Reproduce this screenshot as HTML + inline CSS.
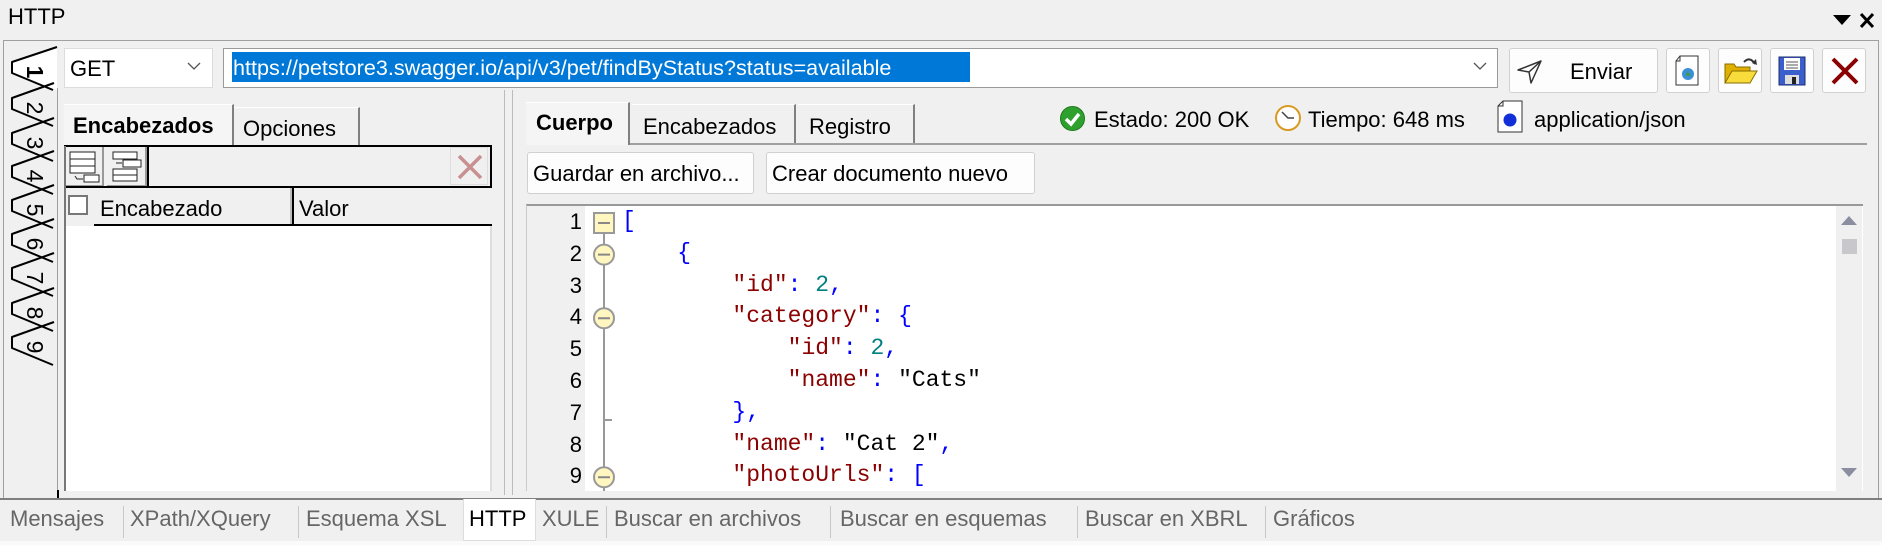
<!DOCTYPE html>
<html><head><meta charset="utf-8"><style>
*{margin:0;padding:0;box-sizing:border-box}
body{width:1882px;height:545px;background:#f0f0f0;font-family:"Liberation Sans",sans-serif;font-size:22px;color:#000;position:relative;overflow:hidden}
.a{position:absolute}
.btn{position:absolute;background:#fdfdfd;border:1px solid #d0d0d0;border-radius:3px}
.code{position:absolute;font-family:"Liberation Mono",monospace;font-size:23px;white-space:pre;line-height:31.8px}
.k{color:#8b0000}.p{color:#0000ff}.n{color:#008080}
.ln{position:absolute;width:40px;text-align:right;font-size:22px;line-height:31.8px}
.bt{position:absolute;top:506px;color:#666;font-size:22px;white-space:nowrap}
.sep{position:absolute;top:506px;width:1px;height:32px;background:#c8c8c8}
</style></head><body>
<div class="a" style="left:8px;top:4px;font-size:22px">HTTP</div>
<svg class="a" style="left:1830px;top:10px" width="50" height="22"><path d="M3 5 L21 5 L12 15 Z" fill="#000"/><path d="M31 4 L43 17 M43 4 L31 17" stroke="#000" stroke-width="3"/></svg>
<div class="a" style="left:3px;top:40px;width:1876px;height:460px;border:1px solid #a0a0a0;border-bottom:2px solid #808080"></div>
<!-- vertical tabs (page coords offset by 40) -->
<svg class="a" style="left:0;top:40px" width="60" height="340">
<path d="M57 7 L12 22 L12 33 L57 50 Z" fill="#fff"/>
<g stroke="#000" stroke-width="2" fill="none" stroke-linejoin="round">
<path d="M57 7 L12 22 L12 33 L53 50"/>
<path d="M54 43 L12 58 L12 69 L53 86"/>
<path d="M54 78 L12 93 L12 104 L53 121"/>
<path d="M54 111 L12 126 L12 137 L53 154"/>
<path d="M54 145 L12 160 L12 171 L53 188"/>
<path d="M54 179 L12 194 L12 205 L53 222"/>
<path d="M54 213 L12 228 L12 239 L53 256"/>
<path d="M54 248 L12 263 L12 274 L53 291"/>
<path d="M54 282 L12 297 L12 308 L53 325"/>
</g>
<g font-family="Liberation Sans" font-size="23" text-anchor="middle">
<text transform="translate(35,32) rotate(90)" dominant-baseline="central" font-weight="bold">1</text>
<text transform="translate(35,68) rotate(90)" dominant-baseline="central">2</text>
<text transform="translate(35,103) rotate(90)" dominant-baseline="central">3</text>
<text transform="translate(35,136) rotate(90)" dominant-baseline="central">4</text>
<text transform="translate(35,170) rotate(90)" dominant-baseline="central">5</text>
<text transform="translate(35,204) rotate(90)" dominant-baseline="central">6</text>
<text transform="translate(35,238) rotate(90)" dominant-baseline="central">7</text>
<text transform="translate(35,273) rotate(90)" dominant-baseline="central">8</text>
<text transform="translate(35,307) rotate(90)" dominant-baseline="central">9</text>
</g></svg>
<div class="a" style="left:57px;top:88px;width:1px;height:408px;background:#a0a0a0"></div>
<div class="a" style="left:57px;top:490px;width:2px;height:10px;background:#000"></div>
<!-- GET combo -->
<div class="btn" style="left:64px;top:48px;width:149px;height:40px;border-color:#dcdcdc;border-radius:0;background:#fff"></div>
<div class="a" style="left:70px;top:56px">GET</div>
<svg class="a" style="left:186px;top:60px" width="16" height="12"><path d="M2 3 L8 9 L14 3" stroke="#555" fill="none" stroke-width="1.3"/></svg>
<!-- URL -->
<div class="a" style="left:223px;top:48px;width:1275px;height:40px;background:#fff;border:1px solid #999"></div>
<div class="a" style="left:232px;top:52px;width:738px;height:30px;background:#0078d7"></div>
<div class="a" style="left:233px;top:55px;color:#fff;font-size:21.6px;white-space:nowrap">https://petstore3.swagger.io/api/v3/pet/findByStatus?status=available</div>
<svg class="a" style="left:1472px;top:60px" width="16" height="12"><path d="M2 3 L8 9 L14 3" stroke="#555" fill="none" stroke-width="1.3"/></svg>
<!-- Enviar etc -->
<div class="btn" style="left:1509px;top:48px;width:149px;height:45px"></div>
<svg class="a" style="left:1516px;top:58px" width="30" height="28"><path d="M2 12 L25 3 L15 25 L13 14 Z M13 14 L25 3" stroke="#333" fill="none" stroke-width="1.5" stroke-linejoin="round"/></svg>
<div class="a" style="left:1570px;top:59px">Enviar</div>
<div class="btn" style="left:1666px;top:48px;width:44px;height:45px"></div>
<svg class="a" style="left:1673px;top:54px" width="30" height="34"><path d="M7 2 L25 2 L25 31 L3 31 L3 7 Z" fill="#fff" stroke="#333"/><path d="M3 7 L7 7 L7 2" fill="none" stroke="#333"/><circle cx="15" cy="20" r="6" fill="#3a8fd6"/><path d="M12 16 q3 2 1 5 q3 2 5 0" fill="#3c9d3c"/></svg>
<div class="btn" style="left:1718px;top:48px;width:44px;height:45px"></div>
<svg class="a" style="left:1722px;top:55px" width="38" height="32"><path d="M3 9 L12 9 L14 12 L28 12 L28 28 L3 28 Z" fill="#e0b000" stroke="#8a6d00"/><path d="M3 28 L10 16 L35 16 L28 28 Z" fill="#f8dc3c" stroke="#8a6d00"/><path d="M22 7 q6 -6 11 2" stroke="#333" fill="none" stroke-width="2"/><path d="M30 8 L35 10 L34 4" fill="#333"/></svg>
<div class="btn" style="left:1770px;top:48px;width:44px;height:45px"></div>
<svg class="a" style="left:1777px;top:55px" width="30" height="32"><rect x="2" y="2" width="26" height="28" fill="#3a5fcd" stroke="#1c2d6e"/><rect x="7" y="3" width="16" height="12" fill="#fff"/><path d="M9 7 H21 M9 10 H21 M9 13 H21" stroke="#555"/><rect x="8" y="20" width="14" height="9" fill="#ddd"/><rect x="15" y="22" width="4" height="7" fill="#222"/></svg>
<div class="btn" style="left:1822px;top:48px;width:44px;height:45px"></div>
<svg class="a" style="left:1830px;top:56px" width="30" height="30"><path d="M3 3 L27 27 M27 3 L3 27" stroke="#8b0000" stroke-width="4"/></svg>
<!-- left pane tabs -->
<div class="a" style="left:64px;top:104px;width:170px;height:42px;background:#f5f5f5;border-right:2px solid #808080;border-top:1px solid #fff"></div>
<div class="a" style="left:73px;top:113px;font-weight:bold">Encabezados</div>
<div class="a" style="left:234px;top:107px;width:126px;height:39px;border-right:2px solid #808080;border-top:1px solid #fff"></div>
<div class="a" style="left:243px;top:116px">Opciones</div>
<!-- toolbar -->
<div class="a" style="left:64px;top:145px;width:428px;height:2px;background:#000"></div>
<div class="a" style="left:64px;top:147px;width:40px;height:40px;border-right:2px solid #999;border-bottom:2px solid #999"></div>
<svg class="a" style="left:69px;top:151px" width="32" height="32"><rect x="1" y="1" width="25" height="7" fill="#fff" stroke="#222"/><rect x="1" y="8" width="25" height="7" fill="#fff" stroke="#222"/><rect x="1" y="15" width="25" height="7" fill="#fff" stroke="#222"/><rect x="15" y="24" width="15" height="7" fill="#fff" stroke="#222"/><path d="M14 28 L8 28 L6 25" stroke="#222" fill="none"/></svg>
<div class="a" style="left:107px;top:147px;width:40px;height:40px;border-right:2px solid #999;border-bottom:2px solid #999"></div>
<svg class="a" style="left:111px;top:151px" width="32" height="32"><rect x="2" y="1" width="24" height="7" fill="#fff" stroke="#222"/><rect x="12" y="9" width="18" height="7" fill="#fff" stroke="#222"/><rect x="2" y="18" width="24" height="12" fill="#fff" stroke="#222"/><path d="M2 24 H26" stroke="#222"/><path d="M5 12 H11" stroke="#222"/></svg>
<div class="a" style="left:147px;top:147px;width:2px;height:40px;background:#000"></div>
<div class="a" style="left:450px;top:147px;width:38px;height:38px;border:1px solid #ddd"></div>
<svg class="a" style="left:455px;top:152px" width="30" height="30"><path d="M4 4 L26 26 M26 4 L4 26" stroke="#c89090" stroke-width="3.5"/></svg>
<div class="a" style="left:490px;top:147px;width:2px;height:40px;background:#000"></div>
<div class="a" style="left:64px;top:186px;width:428px;height:2px;background:#000"></div>
<!-- header -->
<div class="a" style="left:68px;top:195px;width:20px;height:20px;border:2px solid #777;background:#fff"></div>
<div class="a" style="left:94px;top:188px;width:198px;height:37px;border-right:2px solid #bbb"></div>
<div class="a" style="left:100px;top:196px">Encabezado</div>
<div class="a" style="left:292px;top:188px;width:2px;height:38px;background:#000"></div>
<div class="a" style="left:299px;top:196px">Valor</div>
<div class="a" style="left:94px;top:224px;width:398px;height:2px;background:#000"></div>
<div class="a" style="left:64px;top:226px;width:428px;height:265px;background:#fff"></div>
<div class="a" style="left:64px;top:146px;width:2px;height:345px;background:#777"></div>
<div class="a" style="left:490px;top:226px;width:2px;height:265px;background:#ddd"></div>
<!-- splitter -->
<div class="a" style="left:504px;top:90px;width:1px;height:405px;background:#bbb"></div>
<div class="a" style="left:512px;top:90px;width:1px;height:405px;background:#bbb"></div>
<!-- right tabs -->
<div class="a" style="left:526px;top:102px;width:104px;height:43px;background:#f5f5f5;border-right:2px solid #808080;border-top:1px solid #fff"></div>
<div class="a" style="left:536px;top:110px;font-weight:bold">Cuerpo</div>
<div class="a" style="left:632px;top:104px;width:164px;height:41px;border-right:2px solid #808080;border-top:1px solid #fff"></div>
<div class="a" style="left:643px;top:114px">Encabezados</div>
<div class="a" style="left:798px;top:104px;width:117px;height:41px;border-right:2px solid #808080;border-top:1px solid #fff"></div>
<div class="a" style="left:809px;top:114px">Registro</div>
<div class="a" style="left:630px;top:143px;width:1237px;height:2px;background:#a0a0a0"></div>
<!-- status -->
<svg class="a" style="left:1059px;top:105px" width="27" height="27"><circle cx="13.5" cy="13.5" r="12" fill="#2ea02e" stroke="#1d7a1d"/><path d="M7 14 L12 19 L20 9" stroke="#fff" stroke-width="3.5" fill="none"/></svg>
<div class="a" style="left:1094px;top:107px">Estado: 200 OK</div>
<svg class="a" style="left:1274px;top:104px" width="28" height="28"><circle cx="14" cy="14" r="12" fill="#fff" stroke="#d89a20" stroke-width="2"/><path d="M8 8 L14 14 L20 14" stroke="#444" fill="none" stroke-width="1.5"/></svg>
<div class="a" style="left:1308px;top:107px">Tiempo: 648 ms</div>
<svg class="a" style="left:1497px;top:100px" width="28" height="34"><path d="M6 1 L25 1 L25 32 L1 32 L1 6 Z" fill="#fff" stroke="#333"/><path d="M1 6 L6 6 L6 1" fill="none" stroke="#333"/><circle cx="13" cy="20" r="6.5" fill="#1230d8"/></svg>
<div class="a" style="left:1534px;top:107px">application/json</div>
<!-- buttons -->
<div class="btn" style="left:527px;top:152px;width:227px;height:42px"></div>
<div class="a" style="left:533px;top:161px">Guardar en archivo...</div>
<div class="btn" style="left:766px;top:152px;width:269px;height:42px"></div>
<div class="a" style="left:772px;top:161px">Crear documento nuevo</div>
<!-- editor -->
<div class="a" style="left:526px;top:204px;width:1337px;height:287px;background:#fff;border-top:2px solid #999;border-left:1px solid #ccc"></div>
<div class="a" style="left:527px;top:206px;width:58px;height:285px;background:#f0f0f0"></div>
<div class="ln" style="left:542px;top:206px">1<br>2<br>3<br>4<br>5<br>6<br>7<br>8<br>9</div>
<svg class="a" style="left:590px;top:206px" width="30" height="285">
<path d="M14 28 L14 285" stroke="#999" stroke-width="2"/>
<path d="M14 214 L22 214" stroke="#999" stroke-width="2"/>
<rect x="4" y="7" width="20" height="20" fill="#fff6c0" stroke="#999" stroke-width="2"/><path d="M8 17 H20" stroke="#888" stroke-width="2"/>
<g fill="#fff6c0" stroke="#999" stroke-width="2"><circle cx="14" cy="48.6" r="10"/><circle cx="14" cy="112.2" r="10"/><circle cx="14" cy="271.2" r="10"/></g>
<g stroke="#888" stroke-width="2"><path d="M8 48.6 H20 M8 112.2 H20 M8 271.2 H20"/></g>
</svg>
<div class="code" style="left:622px;top:206px"><span class="p">[</span>
    <span class="p">{</span>
        <span class="k">"id"</span><span class="p">:</span> <span class="n">2</span><span class="p">,</span>
        <span class="k">"category"</span><span class="p">:</span> <span class="p">{</span>
            <span class="k">"id"</span><span class="p">:</span> <span class="n">2</span><span class="p">,</span>
            <span class="k">"name"</span><span class="p">:</span> "Cats"
        <span class="p">},</span>
        <span class="k">"name"</span><span class="p">:</span> "Cat 2"<span class="p">,</span>
        <span class="k">"photoUrls"</span><span class="p">:</span> <span class="p">[</span></div>
<div class="a" style="left:1836px;top:206px;width:26px;height:285px;background:#f0f0f0"></div>
<svg class="a" style="left:1838px;top:212px" width="22" height="270"><path d="M3 13 L11 4 L19 13 Z" fill="#8a8ea0"/><rect x="4" y="27" width="15" height="15" fill="#c8c8cc"/><path d="M3 256 L11 265 L19 256 Z" fill="#8a8ea0"/></svg>
<!-- bottom tabs -->
<div class="a" style="left:0;top:498px;width:1882px;height:2px;background:#808080"></div>
<div class="a" style="left:463px;top:499px;width:73px;height:42px;background:#fff;border:1px solid #ddd;border-top:none"></div>
<div class="bt" style="left:10px">Mensajes</div>
<div class="sep" style="left:123px"></div>
<div class="bt" style="left:130px">XPath/XQuery</div>
<div class="sep" style="left:298px"></div>
<div class="bt" style="left:306px">Esquema XSL</div>
<div class="bt" style="left:469px;color:#000">HTTP</div>
<div class="bt" style="left:542px">XULE</div>
<div class="sep" style="left:606px"></div>
<div class="bt" style="left:614px">Buscar en archivos</div>
<div class="sep" style="left:830px"></div>
<div class="bt" style="left:840px">Buscar en esquemas</div>
<div class="sep" style="left:1077px"></div>
<div class="bt" style="left:1085px">Buscar en XBRL</div>
<div class="sep" style="left:1265px"></div>
<div class="bt" style="left:1273px">Gráficos</div>
<div class="a" style="left:0;top:541px;width:1882px;height:4px;background:#fafafa"></div>
</body></html>
